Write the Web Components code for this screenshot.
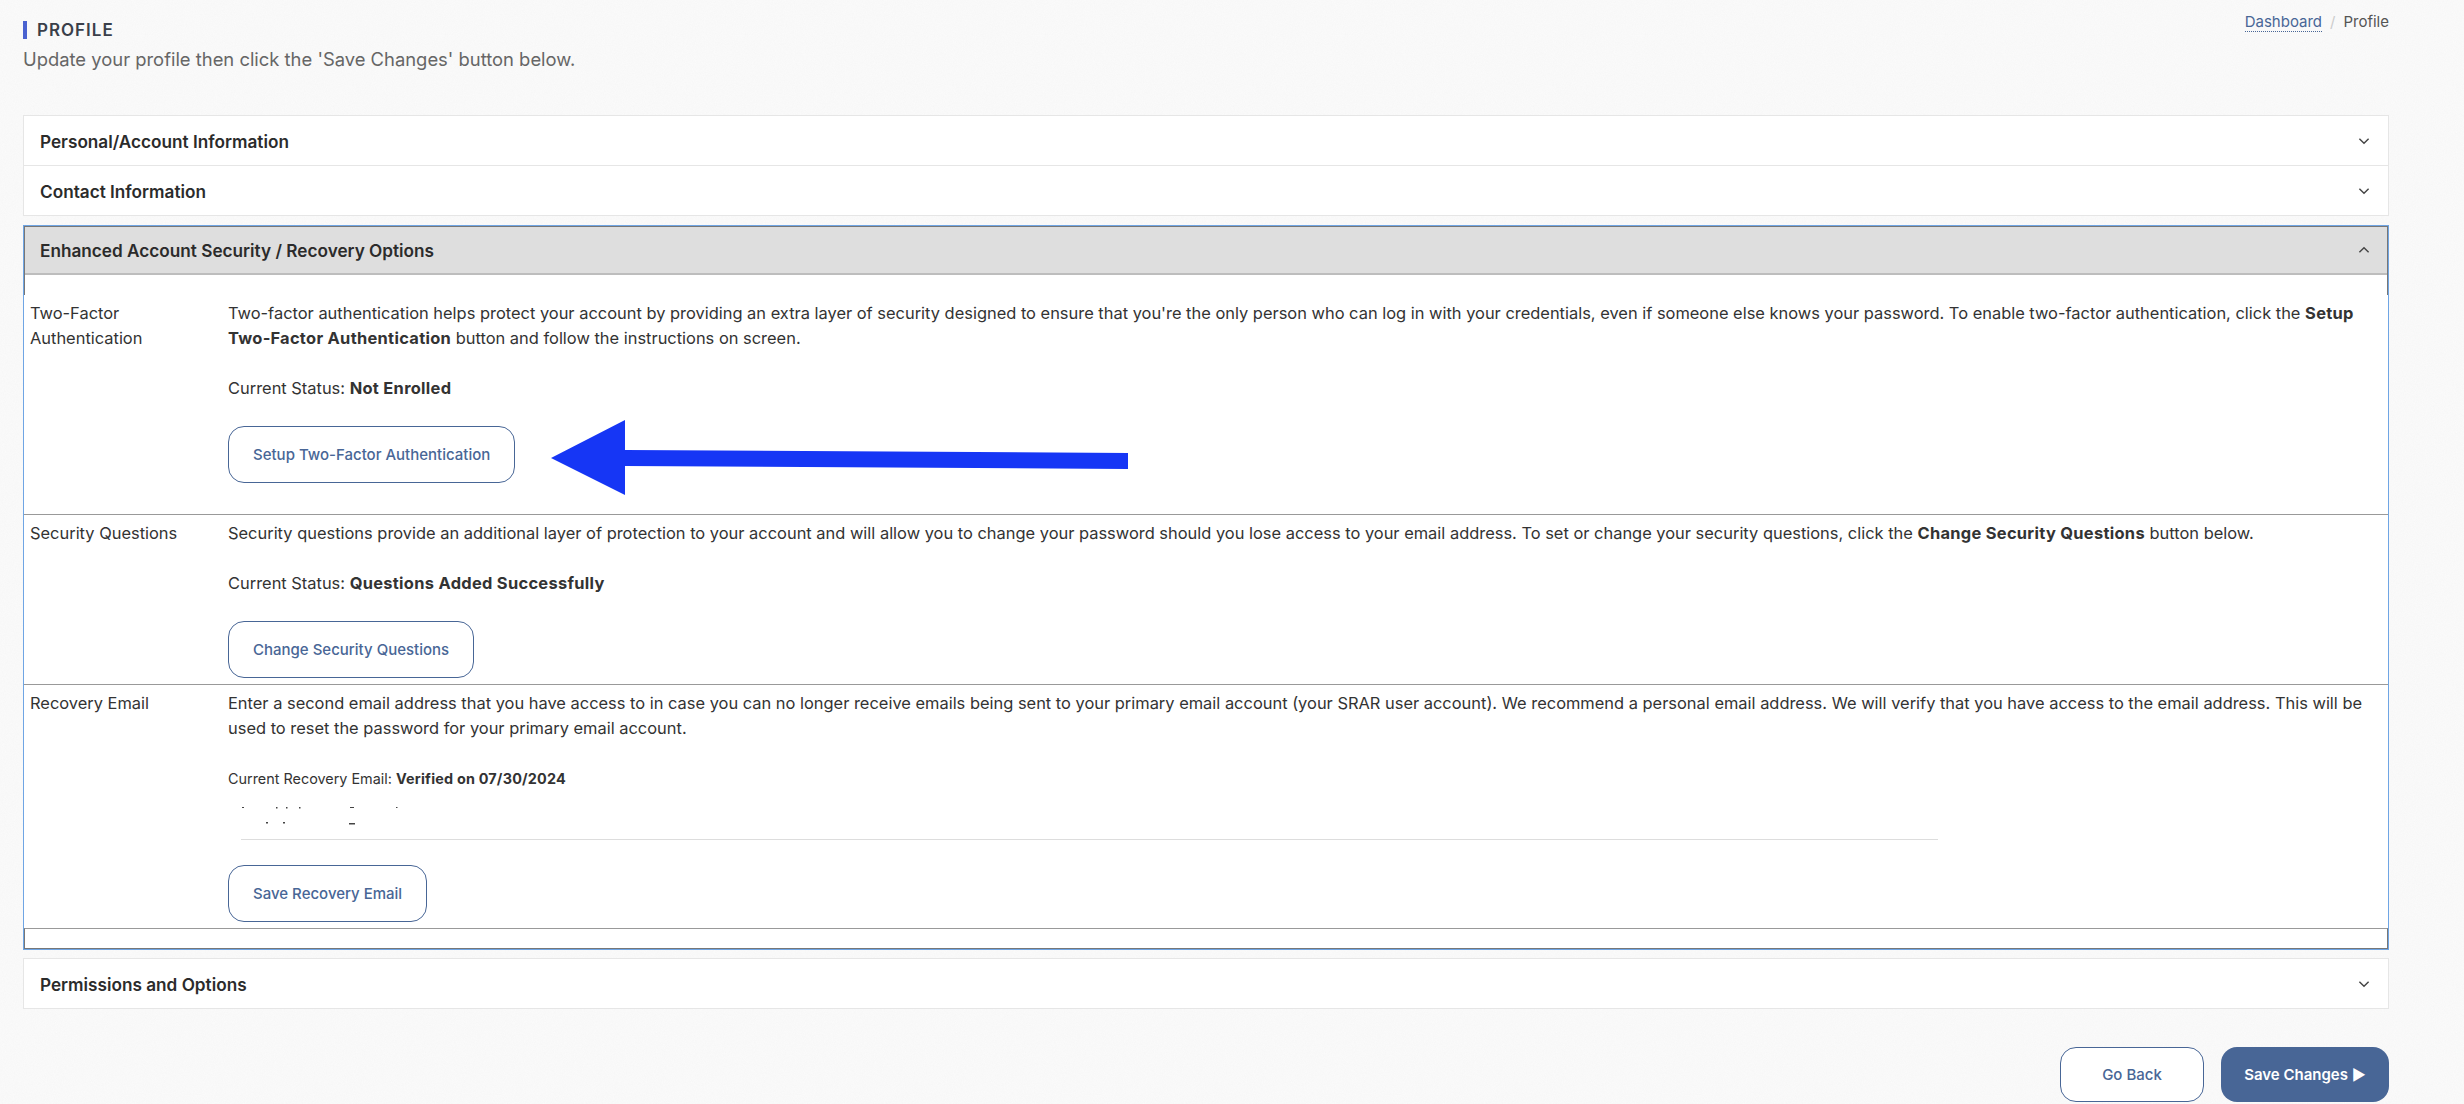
<!DOCTYPE html>
<html lang="en"><head><meta charset="utf-8"><title>Profile</title>
<style>
html,body{margin:0;padding:0}
body{background-color:#fbfbfb;background-image:url("data:image/svg+xml,%3Csvg xmlns='http://www.w3.org/2000/svg' width='300' height='300'%3E%3Cfilter id='n'%3E%3CfeTurbulence type='fractalNoise' baseFrequency='.9' numOctaves='2' stitchTiles='stitch'/%3E%3CfeColorMatrix values='0 0 0 0 .5 0 0 0 0 .5 0 0 0 0 .5 0 0 0 .07 0'/%3E%3C/filter%3E%3Crect width='300' height='300' filter='url(%23n)'/%3E%3C/svg%3E");font:16.43px/25px Inter,"Liberation Sans",sans-serif;color:#333;width:2464px;height:1104px;overflow:hidden}
</style></head><body>
<profile-page>
  <page-head slot="head" heading="PROFILE" sub="Update your profile then click the 'Save Changes' button below."></page-head>
  <acc-item heading="Personal/Account Information" first></acc-item>
  <acc-item heading="Contact Information" last></acc-item>
  <acc-open heading="Enhanced Account Security / Recovery Options">
    <sec-row label="Two-Factor Authentication" tail="31">
      <p>Two-factor authentication helps protect your account by providing an extra layer of security designed to ensure that you're the only person who can log in with your credentials, even if someone else knows your password. To enable two-factor authentication, click the <b>Setup Two&#8209;Factor Authentication</b> button and follow the instructions on screen.</p>
      <p>Current Status: <b>Not Enrolled</b></p>
      <div class="act"><out-btn>Setup Two-Factor Authentication</out-btn><big-arrow></big-arrow></div>
    </sec-row>
    <sec-row label="Security Questions" tail="6">
      <p>Security questions provide an additional layer of protection to your account and will allow you to change your password should you lose access to your email address. To set or change your security questions, click the <b>Change Security Questions</b> button below.</p>
      <p>Current Status: <b>Questions Added Successfully</b></p>
      <div class="act"><out-btn>Change Security Questions</out-btn></div>
    </sec-row>
    <sec-row label="Recovery Email" tail="6">
      <p>Enter a second email address that you have access to in case you can no longer receive emails being sent to your primary email account (your SRAR user account). We recommend a personal email address. We will verify that you have access to the email address. This will be used to reset the password for your primary email account.</p>
      <p class="small">Current Recovery Email: <b>Verified on 07/30/2024</b></p>
      <masked-input></masked-input>
      <div class="act tight"><out-btn>Save Recovery Email</out-btn></div>
    </sec-row>
  </acc-open>
  <acc-item heading="Permissions and Options" first last></acc-item>
  <page-foot></page-foot>
</profile-page>
<script>
const chev = up => `<svg width="12" height="8" viewBox="0 0 12 8" fill="none" stroke="#444" stroke-width="1.4" aria-hidden="true"><path d="${up?'M1.4 6.3 6 1.7l4.6 4.6':'M1.4 1.7 6 6.3l4.6-4.6'}"/></svg>`;
function def(name, html){
  customElements.define(name, class extends HTMLElement{
    connectedCallback(){
      if(this.shadowRoot) return;
      const r=this.attachShadow({mode:'open'});
      r.innerHTML = typeof html==='function'? html(this): html;
    }
  });
}
def('profile-page',`<style>
:host{display:block;padding:0 75px 0 23px}
</style><slot name="head"></slot><slot></slot>`);
def('page-head',h=>`<style>
:host{display:flex;justify-content:space-between;align-items:flex-start;height:115px}
.t{display:flex;align-items:center;height:18px;margin-top:21px;border-left:4px solid #4a62d0;padding-left:10px;font-size:17px;font-weight:600;color:#3a3f4a;letter-spacing:1px}
.s{font-size:18.4px;line-height:28px;margin-top:6px;color:#666}
nav{font-size:15px;line-height:20px;margin-top:12px;color:#555;display:flex}
a{color:#486696;border-bottom:1px dotted #486696;height:19px;text-decoration:none}
i{font-style:normal;color:#ccc;margin:0 8px}
</style><div><div class="t">${h.getAttribute('heading')}</div><div class="s">${h.getAttribute('sub')}</div></div>
<nav><a href="#">Dashboard</a><i>/</i><span>Profile</span></nav>`);
def('acc-item',h=>`<style>
:host{display:flex;justify-content:space-between;align-items:center;height:49px;padding:0 18px 0 16px;background:#fff;border:1px solid #e6e6e6;border-top:${h.hasAttribute('first')?'1px solid #e6e6e6':'0'};font-size:17.2px;font-weight:600;color:#2b2b2b}
span{padding-top:1px}
</style><span>${h.getAttribute('heading')}</span>${chev(false)}`);
def('acc-open',h=>`<style>
:host{display:block;margin:9px 0 8px;background:#fff;border:1px solid #6fa5e4}
.w{border:1px solid #777;border-bottom:0;height:68px}
.h{display:flex;justify-content:space-between;align-items:center;height:46px;padding:0 17px 0 15px;background:#dedede;border-bottom:2px solid #bdbdbd;font-size:17.2px;font-weight:600;color:#2b2b2b}
.e{height:19px;border:1px solid #777;border-top:1px solid #999}
</style><div class="w"><div class="h"><span>${h.getAttribute('heading')}</span>${chev(true)}</div></div><slot></slot><div class="e"></div>`);
def('sec-row',h=>`<style>
:host{display:grid;grid-template-columns:198px 1fr;padding:6px 12px ${h.getAttribute('tail')}px 6px;border-top:1px solid #999;color:#333}
:host(:first-of-type){border-top:0}
.l{padding-right:40px}
</style><div class="l">${h.getAttribute('label')}</div><div><slot></slot></div>`);
def('out-btn',`<style>
:host{display:inline-flex;align-items:center;box-sizing:border-box;height:57px;padding:0 24px;background:#fff;border:1px solid #486696;border-radius:16px;color:#486696;font-size:15px;font-weight:500;white-space:nowrap}
</style><slot></slot>`);
def('big-arrow',`<style>
:host{position:absolute;left:323px;top:-6px;display:block;width:577px;height:75px}
svg{display:block}
</style><svg width="577" height="75" viewBox="0 0 577 75"><path fill="#1636f5" d="M0 38 74 0v30L577 33v16L74 46v29z"/></svg>`);
def('masked-input',`<style>
:host{display:block;height:48px;margin-left:13px;width:1697px;border-bottom:1px solid #ddd}
svg{display:block;padding-top:13px}
</style><svg width="180" height="30" viewBox="0 0 180 30" fill="#444"><rect x="1" y="3" width="2" height="1"/><rect x="35" y="3" width="1.5" height="1.5"/><rect x="45" y="3" width="1.5" height="1.5"/><rect x="58" y="3" width="1.5" height="1.5"/><rect x="109" y="3" width="4" height="1"/><rect x="155" y="3" width="1.5" height="1"/><rect x="25" y="18" width="2" height="1.5"/><rect x="42" y="18" width="2" height="1.5"/><rect x="108" y="19" width="6" height="1.5"/></svg>`);
def('page-foot',`<style>
:host{display:flex;justify-content:flex-end;gap:17px;padding-top:38px;font-size:15px;font-weight:500}
div{display:flex;align-items:center;justify-content:center;box-sizing:border-box;height:55px;border-radius:16px}
.a{width:144px;background:#fff;border:1px solid #486696;color:#486696}
.b{width:168px;background:#486696;color:#fff;font-weight:600}
</style><div class="a">Go Back</div><div class="b">Save Changes ►</div>`);
</script>
<style>
sec-row .act{position:relative;height:57px}
sec-row .act.tight{margin-top:25px}
sec-row .small{font-size:14.4px;margin-bottom:0}
sec-row p{margin:0 0 25px}
sec-row b{letter-spacing:.3px}
sec-row .small b{letter-spacing:.2px}
</style>
</body></html>
